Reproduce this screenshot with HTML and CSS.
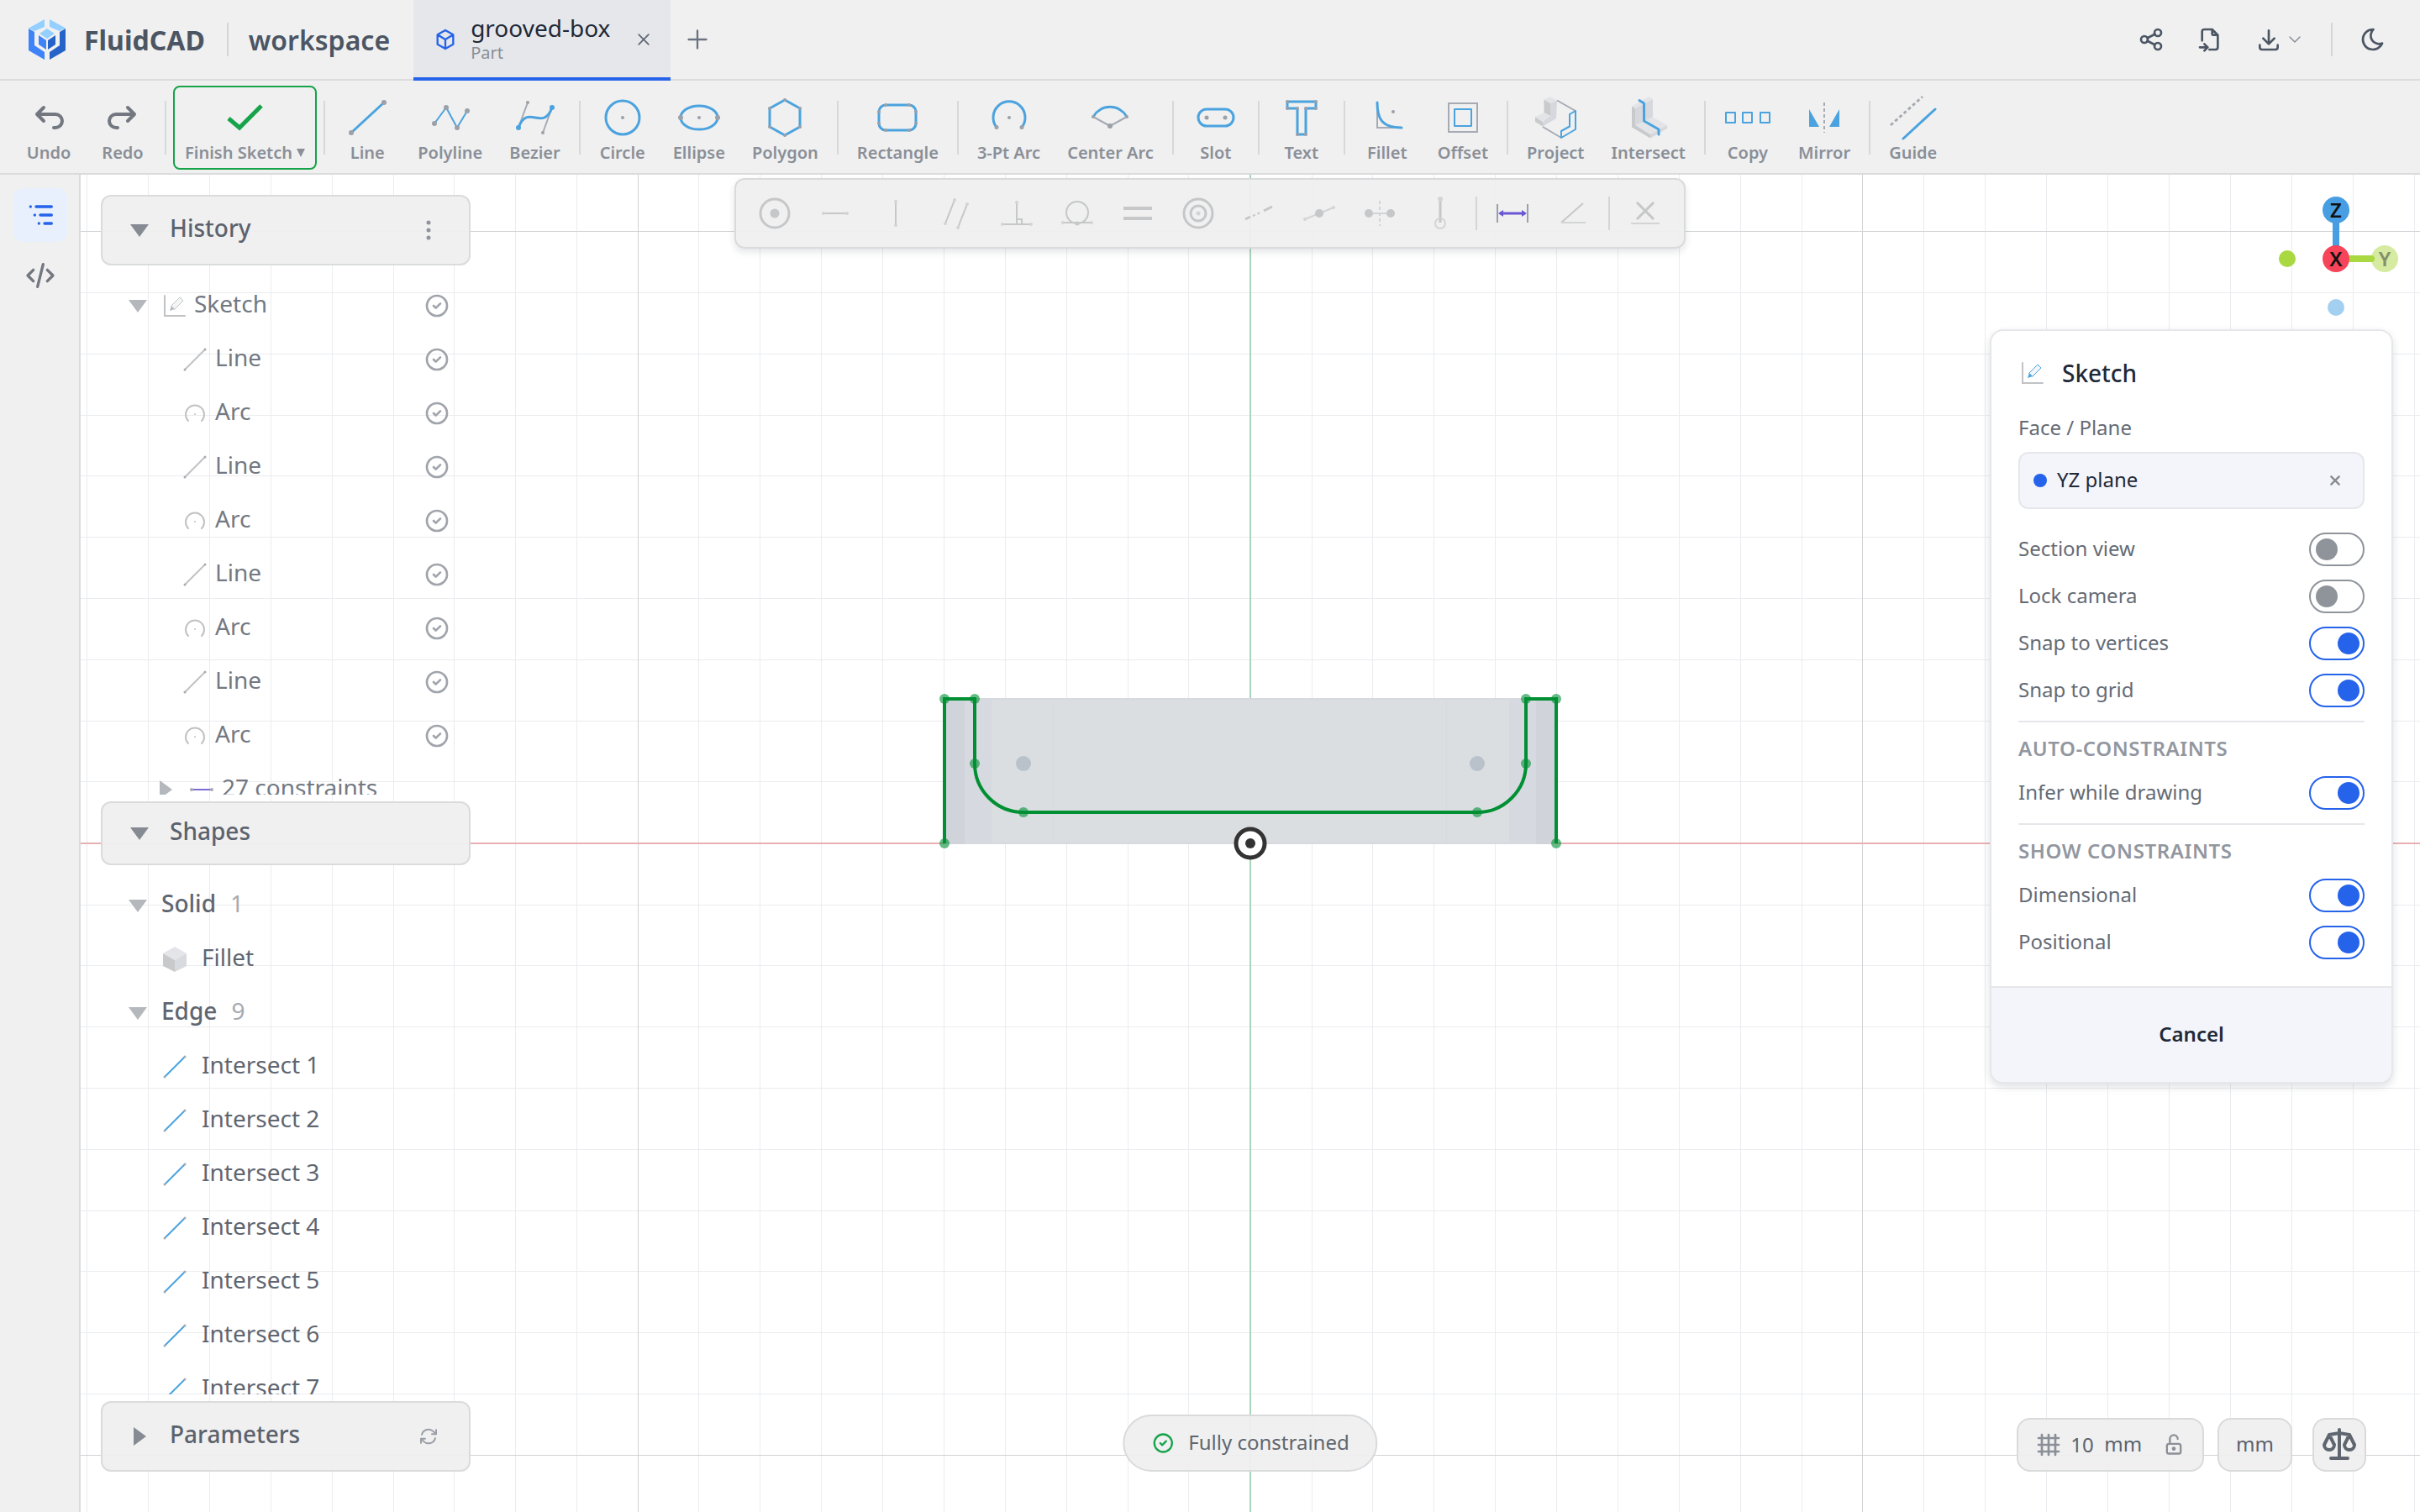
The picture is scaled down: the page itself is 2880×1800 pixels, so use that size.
FILE: index.html
```html
<!DOCTYPE html>
<html lang="en">
<head>
<meta charset="utf-8">
<title>FluidCAD – grooved-box</title>
<link rel="stylesheet" href="styles.css">
</head>
<body>
<svg class="defs" aria-hidden="true">
  <symbol id="i-line" viewBox="0 0 56 56"><path class="b" d="M9 46L48 10"/><circle class="g" cx="9" cy="46" r="3"/><circle class="g" cx="48" cy="10" r="3"/></symbol>
  <symbol id="i-check" viewBox="0 0 24 24"><circle cx="12" cy="12" r="9"/><path d="M9 12l2 2l4-4"/></symbol>
  <symbol id="i-edge" viewBox="0 0 32 32"><path d="M5 27L27 5"/><circle class="end" cx="4" cy="28" r="1.500"/><circle class="end" cx="28" cy="4" r="1.500"/></symbol>
  <symbol id="i-arc" viewBox="0 0 32 32"><path d="M8 25A11 11 0 1 1 24 25"/><path d="M16 17v.1"/></symbol>
  <symbol id="i-sketch" viewBox="0 0 32 32"><path class="ax" d="M5 4V28H29"/><path class="tip" d="M11 22l2-6 4 4z"/><path class="pen" d="M13 16L23 6l4 4-10 10z"/></symbol>
</svg>

<header class="topbar">
  <div class="brand">
    <svg class="logo" viewBox="0 0 44 48">
      <path fill="#93d0ff" d="M19 0V9L7 14L0 10.500zM25 0V9L37 14L44 10.500z"/>
      <path fill="#3f83f8" d="M0 11L7 15V31L19 39V48L0 37z"/>
      <path fill="#2563c9" d="M44 11L37 15V31L25 39V48L44 37z"/>
      <path fill="#93d0ff" d="M22 11L31 17L22 23L13 17z"/>
      <path fill="#3f83f8" d="M12 19L21 25V36L12 30z"/>
      <path fill="#2563c9" d="M32 19L23 25V36L32 30z"/>
    </svg>
    <span class="brand-name">FluidCAD</span>
    <span class="rule"></span>
    <span class="workspace-name">workspace</span>
  </div>
  <div class="tab">
    <svg class="ico tab-ico" viewBox="0 0 24 24"><path d="M12 2.500l8 4.500v10l-8 4.500l-8-4.500V7zM4 7l8 5l8-5M12 12v9.500"/></svg>
    <div class="tab-text"><span class="tab-title">grooved-box</span><span class="tab-kind">Part</span></div>
    <button class="plain" aria-label="Close tab"><svg class="ico close" viewBox="0 0 24 24"><path d="M5 5l14 14M19 5L5 19"/></svg></button>
  </div>
  <button class="plain add" aria-label="New tab"><svg class="ico i28" viewBox="0 0 24 24"><path d="M12 3v18M3 12h18"/></svg></button>
  <nav class="actions">
    <button class="plain" aria-label="Share"><svg class="ico i32" viewBox="0 0 24 24"><circle cx="6" cy="12" r="3"/><circle cx="18" cy="6" r="3"/><circle cx="18" cy="18" r="3"/><path d="M8.700 10.700l6.600-3.400M8.700 13.300l6.600 3.400"/></svg></button>
    <button class="plain" aria-label="Import"><svg class="ico i32" viewBox="0 0 24 24"><path d="M14 3v4a1 1 0 0 0 1 1h4M5 13V5a2 2 0 0 1 2-2h7l5 5v11a2 2 0 0 1-2 2h-5.500M3 19h7m-3-3l3 3l-3 3"/></svg></button>
    <button class="plain download" aria-label="Export"><svg class="ico i32" viewBox="0 0 24 24"><path d="M4 17v2a2 2 0 0 0 2 2h12a2 2 0 0 0 2-2v-2M7 11l5 5l5-5M12 4v12"/></svg><svg class="ico chev" viewBox="0 0 24 24"><path d="M4 8l8 8l8-8"/></svg></button>
    <span class="rule"></span>
    <button class="plain" aria-label="Dark mode"><svg class="ico i32" viewBox="0 0 24 24"><path d="M12 3c.132 0 .263 0 .393 0a7.500 7.500 0 0 0 7.920 12.446a9 9 0 1 1-8.313-12.454z"/></svg></button>
  </nav>
</header>

<div class="toolbar" role="toolbar" aria-label="Sketch tools">
  <button class="tool"><svg class="ico undo" viewBox="0 0 24 24"><path d="M9 14l-4-4l4-4M5 10h11a4 4 0 1 1 0 8h-1"/></svg><span>Undo</span></button>
  <button class="tool"><svg class="ico undo" viewBox="0 0 24 24"><path d="M15 14l4-4l-4-4M19 10H8a4 4 0 1 0 0 8h1"/></svg><span>Redo</span></button>
  <i class="sep"></i>
  <button class="tool finish"><svg class="glyph" viewBox="0 0 56 56"><path class="ok" d="M8 29L21 40L47 14"/></svg><span>Finish Sketch <svg class="drop" viewBox="0 0 10 10"><path d="M0 0H10L5 10z"/></svg></span></button>
  <i class="sep"></i>
  <button class="tool"><svg class="glyph"><use href="#i-line"/></svg><span>Line</span></button>
  <button class="tool"><svg class="glyph" viewBox="0 0 56 56"><path class="b thin" d="M9 35L23 16L36 40L48 20"/><circle class="g" cx="9" cy="35" r="3"/><circle class="g" cx="23" cy="16" r="3"/><circle class="g" cx="36" cy="40" r="3"/><circle class="g" cx="48" cy="20" r="3"/></svg><span>Polyline</span></button>
  <button class="tool"><svg class="glyph" viewBox="0 0 56 56"><path class="gl" d="M8 40L19 10M37 46L48 16"/><path class="b" d="M8 40C19 10 37 46 48 16"/><circle class="g" cx="19" cy="10" r="2"/><circle class="g" cx="37" cy="46" r="2"/><circle class="bf" cx="8" cy="40" r="3"/><circle class="bf" cx="48" cy="16" r="3"/></svg><span>Bezier</span></button>
  <i class="sep"></i>
  <button class="tool"><svg class="glyph" viewBox="0 0 56 56"><circle class="b" cx="28" cy="28" r="20"/><circle class="g" cx="28" cy="28" r="2"/></svg><span>Circle</span></button>
  <button class="tool"><svg class="glyph" viewBox="0 0 56 56"><ellipse class="b" cx="28" cy="28" rx="22" ry="14"/><circle class="g" cx="28" cy="28" r="2"/><circle class="g" cx="6" cy="28" r="3"/><circle class="g" cx="50" cy="28" r="3"/></svg><span>Ellipse</span></button>
  <button class="tool"><svg class="glyph" viewBox="0 0 56 56"><path class="b" d="M28 7L46 17V39L28 49L10 39V17z"/><g class="g"><circle cx="28" cy="7" r="2"/><circle cx="46" cy="17" r="2"/><circle cx="46" cy="39" r="2"/><circle cx="28" cy="49" r="2"/><circle cx="10" cy="39" r="2"/><circle cx="10" cy="17" r="2"/></g></svg><span>Polygon</span></button>
  <i class="sep"></i>
  <button class="tool"><svg class="glyph" viewBox="0 0 56 56"><rect class="b" x="6" y="13" width="44" height="30" rx="8"/><g class="g"><circle cx="14" cy="13" r="2"/><circle cx="42" cy="13" r="2"/><circle cx="14" cy="43" r="2"/><circle cx="42" cy="43" r="2"/><circle cx="6" cy="21" r="2"/><circle cx="6" cy="35" r="2"/><circle cx="50" cy="21" r="2"/><circle cx="50" cy="35" r="2"/></g></svg><span>Rectangle</span></button>
  <i class="sep"></i>
  <button class="tool"><svg class="glyph" viewBox="0 0 56 56"><path class="b" d="M13 39.500A19 19 0 1 1 43 39.500"/><circle class="g" cx="28" cy="28" r="2"/><circle class="g" cx="13" cy="39.500" r="2.500"/><circle class="g" cx="43" cy="39.500" r="2.500"/></svg><span>3-Pt Arc</span></button>
  <button class="tool"><svg class="glyph" viewBox="0 0 56 56"><path class="gl" d="M8 27L28 38L48 27"/><path class="b" d="M8 27A23 23 0 0 1 48 27"/><circle class="g" cx="8" cy="27" r="2"/><circle class="g" cx="48" cy="27" r="2"/><circle class="g" cx="28" cy="38" r="3"/></svg><span>Center Arc</span></button>
  <i class="sep"></i>
  <button class="tool"><svg class="glyph" viewBox="0 0 56 56"><rect class="b" x="7" y="18" width="42" height="20" rx="10"/><circle class="g" cx="17" cy="28" r="2.500"/><circle class="g" cx="39" cy="28" r="2.500"/></svg><span>Slot</span></button>
  <i class="sep"></i>
  <button class="tool"><svg class="glyph" viewBox="0 0 56 56"><path class="b" d="M11 9H45V17H33V48H23V17H11z"/><g class="g"><circle cx="11" cy="9" r="2"/><circle cx="45" cy="9" r="2"/><circle cx="45" cy="17" r="2"/><circle cx="33" cy="17" r="2"/><circle cx="33" cy="48" r="2"/><circle cx="23" cy="48" r="2"/><circle cx="23" cy="17" r="2"/><circle cx="11" cy="17" r="2"/></g></svg><span>Text</span></button>
  <i class="sep"></i>
  <button class="tool"><svg class="glyph" viewBox="0 0 56 56"><path class="gl" d="M16 20V40H36"/><path class="b" d="M16 10C16 30 22 40 45 40"/><circle class="g" cx="35" cy="21" r="2"/></svg><span>Fillet</span></button>
  <button class="tool"><svg class="glyph" viewBox="0 0 56 56"><rect class="gl" x="11" y="11" width="34" height="34"/><rect class="b thin" x="18" y="18" width="20" height="20"/></svg><span>Offset</span></button>
  <i class="sep"></i>
  <button class="tool"><svg class="glyph" viewBox="0 0 56 56"><path fill="#c9cacb" d="M14.500 6.500L22 11V26L14.500 22zM4 27L13 33V38.500L4 33z"/><path fill="#e3e4e7" d="M14.500 6.500L21.500 3L30 7.500L22 11zM4 27L14.500 22L22 26L13 33z"/><path fill="#d6d8dd" d="M22 11L30 7.500L29 29L13 38.500V33L22 26z"/><path class="gl" d="M30 7.500L52 20M13 39L35 52"/><path class="b thin" d="M52 20L45 24V38.500L35 44V52L52 42z"/></svg><span>Project</span></button>
  <button class="tool"><svg class="glyph" viewBox="0 0 56 56"><path fill="#c9cacb" d="M8 14.500L12.500 17V37L30 48V52.500L8 39.500z"/><path fill="#e3e4e7" d="M8 14.500L28.500 3L33 6L12.500 17zM12.500 37L32 27L50 37L30 48z"/><path fill="#d6d8dd" d="M12.500 17L33 6V27L12.500 37zM50 37V41L30 52.500V48z"/><path class="b" d="M17 7.500L22.500 11V32L40 42V48"/></svg><span>Intersect</span></button>
  <i class="sep"></i>
  <button class="tool"><svg class="glyph" viewBox="0 0 56 56"><path class="b thin" d="M2 22h11v12H2zM22 22h11v12H22zM43 22h11v12H43z"/></svg><span>Copy</span></button>
  <button class="tool"><svg class="glyph" viewBox="0 0 56 56"><path class="bf" d="M10 18V39H22zM46 18V39H34z"/><path class="gl" stroke-dasharray="4 3" d="M28 10V46"/></svg><span>Mirror</span></button>
  <i class="sep"></i>
  <button class="tool"><svg class="glyph" viewBox="0 0 56 56"><path class="gl heavy" stroke-dasharray="4 3" d="M1 37L39 3"/><path class="b" d="M16 53L54 18"/></svg><span>Guide</span></button>
</div>

<main class="work">
  <aside class="rail">
    <button class="rail-btn active" aria-label="Model tree"><svg class="ico i40" viewBox="0 0 24 24"><path d="M9 6h11M12 12h8M15 18h5M5 6v.010M8 12v.010M11 18v.010"/></svg></button>
    <button class="rail-btn" aria-label="Code"><svg class="ico i40" viewBox="0 0 24 24"><path d="M7 8l-4 4l4 4M17 8l4 4l-4 4M14 4l-4 16"/></svg></button>
  </aside>

  <section class="viewport">
    <svg class="scene">
      <svg x="50%" y="50%" overflow="visible">
        <path class="minor" d="M-1384.500-800v1600M-1311.500-800v1600M-1238.500-800v1600M-1165.500-800v1600M-1092.500-800v1600M-1019.500-800v1600M-947.500-800v1600M-874.500-800v1600M-801.500-800v1600M-656.500-800v1600M-583.500-800v1600M-510.500-800v1600M-437.500-800v1600M-364.500-800v1600M-291.500-800v1600M-218.500-800v1600M-145.500-800v1600M-73.500-800v1600M73.500-800v1600M145.500-800v1600M218.500-800v1600M291.500-800v1600M364.500-800v1600M437.500-800v1600M510.500-800v1600M583.500-800v1600M656.500-800v1600M801.500-800v1600M874.500-800v1600M947.500-800v1600M1020.500-800v1600M1093.500-800v1600M1166.500-800v1600M1239.500-800v1600M1312.500-800v1600M1385.500-800v1600
          M-1400-655.500h2800M-1400-582.500h2800M-1400-509.500h2800M-1400-437.500h2800M-1400-364.500h2800M-1400-291.500h2800M-1400-218.500h2800M-1400-145.500h2800M-1400-73.500h2800M-1400 73.500h2800M-1400 145.500h2800M-1400 218.500h2800M-1400 291.500h2800M-1400 364.500h2800M-1400 437.500h2800M-1400 509.500h2800M-1400 582.500h2800M-1400 655.500h2800"/>
        <path class="major" d="M-728.500-800v1600M728.500-800v1600M-1400-728.500h2800M-1400 728.500h2800"/>
        <path class="axis-x" d="M-1400 0H1400"/>
        <path class="axis-y" d="M0-800V800"/>
        <path fill="#d6d9df" d="M-364-173H364V1H-364z"/>
        <path fill="#d0d3d9" d="M-364-173h24V1h-24zM340-173h24V1h-24z"/>
        <path fill="#dadee1" d="M-308-171H308V-1H-308z"/>
        <path stroke="#d6dade" d="M-234.500-171V-1M233.500-171V-1"/>
        <circle fill="#b9c1cb" cx="-270" cy="-95" r="9"/><circle fill="#b9c1cb" cx="270" cy="-95" r="9"/>
        <path class="profile" d="M-364 0V-172H-328V-95A58 58 0 0 0-270-37H270A58 58 0 0 0 328-95V-172H364V0"/>
        <g class="vertex"><circle cx="-364" cy="0" r="6"/><circle cx="-364" cy="-172" r="6"/><circle cx="-328" cy="-172" r="6"/><circle cx="-328" cy="-95" r="6"/><circle cx="-270" cy="-37" r="6"/><circle cx="270" cy="-37" r="6"/><circle cx="328" cy="-95" r="6"/><circle cx="328" cy="-172" r="6"/><circle cx="364" cy="-172" r="6"/><circle cx="364" cy="0" r="6"/></g>
        <circle cx="0" cy="0" r="17" fill="#fff" stroke="#333" stroke-width="5"/><circle cx="0" cy="0" r="6" fill="#333"/>
      </svg>
    </svg>

    <div class="browser">
      <button class="head"><svg class="tri" viewBox="0 0 22 22"><path d="M0 4H22L11 19z"/></svg><span>History</span><svg class="dots" viewBox="0 0 32 32"><circle cx="16" cy="7" r="2.500"/><circle cx="16" cy="16" r="2.500"/><circle cx="16" cy="25" r="2.500"/></svg></button>
      <div class="tree history">
        <div class="row"><svg class="tri" viewBox="0 0 22 22"><path d="M0 4H22L11 19z"/></svg><svg class="ti" viewBox="0 0 32 32"><use href="#i-sketch"/></svg><span>Sketch</span><svg class="ico ck"><use href="#i-check"/></svg></div>
        <div class="row sub"><svg class="ti"><use href="#i-edge"/></svg><span>Line</span><svg class="ico ck"><use href="#i-check"/></svg></div>
        <div class="row sub"><svg class="ti"><use href="#i-arc"/></svg><span>Arc</span><svg class="ico ck"><use href="#i-check"/></svg></div>
        <div class="row sub"><svg class="ti"><use href="#i-edge"/></svg><span>Line</span><svg class="ico ck"><use href="#i-check"/></svg></div>
        <div class="row sub"><svg class="ti"><use href="#i-arc"/></svg><span>Arc</span><svg class="ico ck"><use href="#i-check"/></svg></div>
        <div class="row sub"><svg class="ti"><use href="#i-edge"/></svg><span>Line</span><svg class="ico ck"><use href="#i-check"/></svg></div>
        <div class="row sub"><svg class="ti"><use href="#i-arc"/></svg><span>Arc</span><svg class="ico ck"><use href="#i-check"/></svg></div>
        <div class="row sub"><svg class="ti"><use href="#i-edge"/></svg><span>Line</span><svg class="ico ck"><use href="#i-check"/></svg></div>
        <div class="row sub"><svg class="ti"><use href="#i-arc"/></svg><span>Arc</span><svg class="ico ck"><use href="#i-check"/></svg></div>
        <div class="row constraints"><svg class="tri" viewBox="0 0 22 22"><path d="M4 0V22L19 11z"/></svg><svg class="ti dash" viewBox="0 0 32 32"><path d="M5 16H27"/><circle cx="4" cy="16" r="2"/><circle cx="28" cy="16" r="2"/></svg><span>27 constraints</span></div>
      </div>
      <button class="head slim"><svg class="tri" viewBox="0 0 22 22"><path d="M0 4H22L11 19z"/></svg><span>Shapes</span></button>
      <div class="tree shapes">
        <div class="row group"><svg class="tri" viewBox="0 0 22 22"><path d="M0 4H22L11 19z"/></svg><span>Solid</span><span class="count">1</span></div>
        <div class="row leaf"><svg class="ti" viewBox="0 0 32 32"><path fill="#e4e5e8" d="M16 1L30 9L16 17L2 9z"/><path fill="#c8c9ca" d="M2 9L16 17V31L2 24z"/><path fill="#d7dade" d="M30 9L16 17V31L30 24z"/></svg><span>Fillet</span></div>
        <div class="row group"><svg class="tri" viewBox="0 0 22 22"><path d="M0 4H22L11 19z"/></svg><span>Edge</span><span class="count">9</span></div>
        <div class="row leaf edge"><svg class="ti"><use href="#i-edge"/></svg><span>Intersect 1</span></div>
        <div class="row leaf edge"><svg class="ti"><use href="#i-edge"/></svg><span>Intersect 2</span></div>
        <div class="row leaf edge"><svg class="ti"><use href="#i-edge"/></svg><span>Intersect 3</span></div>
        <div class="row leaf edge"><svg class="ti"><use href="#i-edge"/></svg><span>Intersect 4</span></div>
        <div class="row leaf edge"><svg class="ti"><use href="#i-edge"/></svg><span>Intersect 5</span></div>
        <div class="row leaf edge"><svg class="ti"><use href="#i-edge"/></svg><span>Intersect 6</span></div>
        <div class="row leaf edge"><svg class="ti"><use href="#i-edge"/></svg><span>Intersect 7</span></div>
      </div>
      <button class="head"><svg class="tri" viewBox="0 0 22 22"><path d="M4 0V22L19 11z"/></svg><span>Parameters</span><svg class="ico refresh" viewBox="0 0 24 24"><path d="M16.023 9.348h4.992M2.985 19.644v-4.992h4.992M2.984 14.652l3.181 3.183a8.250 8.250 0 0 0 13.803-3.700M4.031 9.865a8.250 8.250 0 0 1 13.803-3.700l3.181 3.182m0-4.991v4.990"/></svg></button>
    </div>

    <svg class="gizmo" viewBox="0 0 160 160">
      <path stroke="#479ee3" stroke-width="8" d="M80 80V22"/>
      <circle cx="80" cy="22" r="16" fill="#479ee3"/><circle cx="138" cy="80" r="16" fill="#d6eba1"/><path stroke="#aad841" stroke-width="8" stroke-linecap="round" d="M90 80H122"/><circle cx="80" cy="80" r="16" fill="#f8445a"/>
      <circle cx="22" cy="80" r="10" fill="#aad841"/><circle cx="80" cy="138" r="10" fill="#a3cff1"/>
      <text x="80" y="31">Z</text><text x="80" y="89">X</text><text class="dim" x="138" y="89">Y</text>
    </svg>

    <form class="panel">
      <div class="panel-body">
        <h2><svg class="ti tint" viewBox="0 0 32 32"><use href="#i-sketch"/></svg>Sketch</h2>
        <label class="field-label" for="plane-clear">Face / Plane</label>
        <div class="plane"><i class="dot"></i><span>YZ plane</span><button type="button" class="plain" id="plane-clear" aria-label="Clear plane"><svg class="ico" viewBox="0 0 12 12"><path d="M2 2l8 8M10 2l-8 8"/></svg></button></div>
        <label class="opt"><span>Section view</span><input type="checkbox"></label>
        <label class="opt"><span>Lock camera</span><input type="checkbox"></label>
        <label class="opt"><span>Snap to vertices</span><input type="checkbox" checked></label>
        <label class="opt"><span>Snap to grid</span><input type="checkbox" checked></label>
        <h3>AUTO-CONSTRAINTS</h3>
        <label class="opt"><span>Infer while drawing</span><input type="checkbox" checked></label>
        <h3>SHOW CONSTRAINTS</h3>
        <label class="opt"><span>Dimensional</span><input type="checkbox" checked></label>
        <label class="opt"><span>Positional</span><input type="checkbox" checked></label>
      </div>
      <button type="button" class="cancel">Cancel</button>
    </form>

    <div class="status"><svg class="ico" viewBox="0 0 24 24"><use href="#i-check"/></svg><span>Fully constrained</span></div>
    <div class="units">
      <div class="chip gridchip"><svg class="ico i32" viewBox="0 0 24 24"><path d="M3 6h18M3 12h18M3 18h18M6 3v18M12 3v18M18 3v18"/></svg><input aria-label="Grid size" value="10"><span>mm</span><svg class="ico lock" viewBox="0 0 24 24"><rect x="5" y="11" width="14" height="10" rx="2"/><circle cx="12" cy="16" r="1"/><path d="M8 11V6a4 4 0 0 1 8 0"/></svg></div>
      <button class="chip unit"><span>mm</span></button>
      <button class="chip scale" aria-label="Mass properties"><svg class="ico" viewBox="0 0 24 24"><path d="M7 20h10M6 6l6-1l6 1M12 3v17M9 12L6 6l-3 6a3 3 0 0 0 6 0M21 12l-3-6l-3 6a3 3 0 0 0 6 0"/></svg></button>
    </div>
  </section>

  <div class="constraintbar" role="toolbar" aria-label="Constraints">
    <button aria-label="Coincident"><svg viewBox="0 0 48 48"><circle class="c" cx="24" cy="24" r="17"/><circle class="f" cx="24" cy="24" r="5.500"/></svg></button>
    <button aria-label="Horizontal"><svg viewBox="0 0 48 48"><path class="c s" d="M10 24H38"/><circle class="l" cx="10" cy="24" r="2"/><circle class="l" cx="38" cy="24" r="2"/></svg></button>
    <button aria-label="Vertical"><svg viewBox="0 0 48 48"><path class="c s" d="M24 10V38"/><circle class="l" cx="24" cy="10" r="2"/><circle class="l" cx="24" cy="38" r="2"/></svg></button>
    <button aria-label="Parallel"><svg viewBox="0 0 48 48"><path class="c s" d="M22 8L11 36M37 13L26 41"/><g class="l"><circle cx="22" cy="8" r="2"/><circle cx="11" cy="36" r="2"/><circle cx="37" cy="13" r="2"/><circle cx="26" cy="41" r="2"/></g></svg></button>
    <button aria-label="Perpendicular"><svg viewBox="0 0 48 48"><path class="c s" d="M24 11V37M7 37H41M24 31H30V37"/><g class="l"><circle cx="24" cy="11" r="2"/><circle cx="7" cy="37" r="2"/><circle cx="41" cy="37" r="2"/></g></svg></button>
    <button aria-label="Tangent"><svg viewBox="0 0 48 48"><circle class="c s" cx="24" cy="23" r="13"/><path class="c s" d="M7 35H41"/><circle class="f" cx="24" cy="36" r="2.500"/><circle class="l" cx="7" cy="35" r="2"/><circle class="l" cx="41" cy="35" r="2"/></svg></button>
    <button aria-label="Equal"><svg viewBox="0 0 48 48"><path class="c t" d="M7 18H41M7 30H41"/></svg></button>
    <button aria-label="Concentric"><svg viewBox="0 0 48 48"><circle class="c" cx="24" cy="24" r="17"/><circle class="c" cx="24" cy="24" r="9"/><circle class="l" cx="24" cy="24" r="2.500"/></svg></button>
    <button aria-label="Collinear"><svg viewBox="0 0 48 48"><path class="c" d="M8 31L14 28M30 21L40 16"/><path class="c s" stroke-dasharray="3 3" d="M17 27L28 22"/></svg></button>
    <button aria-label="Midpoint"><svg viewBox="0 0 48 48"><path class="lc" d="M7 31L41 17"/><circle class="f" cx="24" cy="24" r="5"/><circle class="l" cx="7" cy="31" r="2"/><circle class="l" cx="41" cy="17" r="2"/></svg></button>
    <button aria-label="Symmetric"><svg viewBox="0 0 48 48"><path class="lc" d="M11 24H37"/><path class="lc" stroke-dasharray="4 3" d="M24 9V39"/><circle class="f" cx="11" cy="24" r="5"/><circle class="f" cx="37" cy="24" r="5"/></svg></button>
    <button aria-label="Fix"><svg viewBox="0 0 48 48"><path class="c" d="M24 8V35"/><circle class="lc" cx="24" cy="36" r="6"/><circle class="l" cx="24" cy="7" r="3"/></svg></button>
    <i class="vsep"></i>
    <button aria-label="Dimension"><svg viewBox="0 0 48 48"><path stroke="#9aa0ab" stroke-width="2" d="M6 13V35M42 13V35"/><path stroke="#6a57d5" stroke-width="3" d="M9 24H39"/><path fill="#6a57d5" d="M7 24l6-4v8zM41 24l-6-4v8z"/></svg></button>
    <button aria-label="Angle"><svg viewBox="0 0 48 48"><path class="c s" d="M36 12L10 35"/><path class="lc" d="M10 35H39"/></svg></button>
    <i class="vsep"></i>
    <button aria-label="Delete constraint"><svg viewBox="0 0 48 48"><path class="c" d="M14 11L34 31M34 11L14 31"/><path class="lc" d="M7 36H41"/></svg></button>
  </div>
</main>
</body>
</html>
```
FILE: styles.css
```css
* { box-sizing: border-box; }

body {
  margin: 0;
  min-height: 100vh;
  display: flex;
  flex-direction: column;
  font-family: "Noto Sans", sans-serif;
  font-size: 24px;
  color: #5f6670;
  background: #fff;
}

button, input {
  font: inherit;
  color: inherit;
}

button {
  margin: 0;
  padding: 0;
  border: 0;
  background: none;
}

svg { display: block; flex: none; }
.defs { position: absolute; width: 0; height: 0; }

.ico {
  fill: none;
  stroke: currentColor;
  stroke-width: 2;
  stroke-linecap: round;
  stroke-linejoin: round;
}
.i28 { width: 28px; height: 28px; }
.i32 { width: 32px; height: 32px; }
.i40 { width: 40px; height: 40px; }
.plain { display: flex; align-items: center; }

/* Top bar */
.topbar {
  display: flex;
  align-items: center;
  height: 96px;
  background: #f0f0f0;
  border-bottom: 2px solid #dadbdc;
}
.brand {
  display: flex;
  align-items: center;
  gap: 24px;
  padding: 0 28px 0 34px;
  color: #4b5563;
  font-size: 32px;
}
.logo { width: 44px; height: 48px; margin-right: -2px; }
.brand-name { font-weight: 700; margin-right: 2px; }
.workspace-name { font-weight: 600; }
.rule { width: 2px; height: 40px; background: #d4d5d7; }

.tab {
  display: flex;
  align-items: center;
  gap: 16px;
  align-self: stretch;
  height: 96px;
  padding: 2px 22px 0 24px;
  background: #e5e7eb;
  border-bottom: 4px solid #2563eb;
}
.tab-ico { width: 28px; height: 28px; color: #2563eb; }
.tab-text { display: flex; flex-direction: column; margin-right: 14px; }
.tab-title { font-size: 28px; line-height: 32px; color: #1f2937; }
.tab-kind { font-size: 20px; line-height: 28px; color: #8a8f98; }
.tab .plain { color: #5f6670; }
.close { width: 20px; height: 20px; }
.add { margin-left: 18px; color: #6b7280; }

.actions {
  display: flex;
  align-items: center;
  gap: 38px;
  margin-left: auto;
  padding-right: 40px;
  color: #4b5563;
}
.download { gap: 6px; }
.chev { width: 18px; height: 18px; color: #8a8f98; }
.actions .rule { margin: 0 -6px 0 -4px; }

/* Tool bar */
.toolbar {
  display: flex;
  align-items: center;
  gap: 4px;
  height: 112px;
  padding: 2px 16px 0;
  background: #f0f0f0;
  border-bottom: 2px solid #dadbdc;
}
.tool {
  display: flex;
  flex-direction: column;
  align-items: center;
  gap: 2px;
  min-width: 84px;
  height: 100px;
  padding: 8px 12px 6px;
  border: 2px solid transparent;
  border-radius: 8px;
  font-size: 20px;
  font-weight: 600;
  line-height: 24px;
  color: #8a8f98;
  white-space: nowrap;
}
.finish { border-color: #16a34a; }
.sep { width: 2px; height: 64px; margin: 0 4px; background: #d6d8da; }
.glyph { width: 56px; height: 56px; fill: none; }
.undo { width: 48px; height: 56px; color: #727780; }
.drop { display: inline-block; width: 10px; height: 10px; fill: currentColor; vertical-align: 2px; }
.b { fill: none; stroke: #4aa3df; stroke-width: 3; stroke-linejoin: round; stroke-linecap: round; }
.thin { stroke-width: 2; }
.bf { fill: #4aa3df; }
.g { fill: #9ba0a9; }
.gl { fill: none; stroke: #a6aab3; stroke-width: 2; }
.heavy { stroke-width: 3; }
.ok { stroke: #16a34a; stroke-width: 5; }

/* Work area */
.work { position: relative; display: flex; flex: 1; }
.rail {
  display: flex;
  flex-direction: column;
  align-items: center;
  gap: 8px;
  width: 96px;
  padding: 16px 0 0 2px;
  background: #f0f0f0;
  border-right: 2px solid #dadbdc;
}
.rail-btn {
  display: grid;
  place-items: center;
  width: 64px;
  height: 64px;
  border-radius: 12px;
  color: #727780;
}
.rail-btn.active { background: #e8f0fe; color: #2563eb; }

.viewport { position: relative; flex: 1; overflow: hidden; }
.scene { position: absolute; inset: 0; width: 100%; height: 100%; }
.minor { stroke: #ebecef; }
.major { stroke: #d2d3d5; }
.axis-x { stroke: #e8b0b4; stroke-width: 2; }
.axis-y { stroke: #a9d5bb; stroke-width: 2; }
.profile { fill: none; stroke: #009033; stroke-width: 4; }
.vertex { fill: #009033; fill-opacity: .6; }

/* Model browser */
.browser {
  position: absolute;
  top: 24px;
  bottom: 48px;
  left: 24px;
  width: 440px;
  display: flex;
  flex-direction: column;
  font-size: 28px;
}
.head {
  display: flex;
  align-items: center;
  gap: 25px;
  flex: none;
  height: 84px;
  padding: 0 32px 0 33px;
  border: 2px solid #dadbdc;
  border-radius: 12px;
  background: rgba(239, 239, 239, .94);
  font-weight: 500;
  color: #5b626d;
}
.head.slim { height: 76px; }
.head .tri { color: #868b93; }
.head span { flex: 1; text-align: left; line-height: 32px; padding-bottom: 6px; }
.tri { width: 22px; height: 22px; color: #b4b8bd; }
.tri path { fill: currentColor; }
.dots { width: 32px; height: 32px; fill: #8f949c; }
.refresh { width: 24px; height: 24px; margin: 0 4px; color: #9a9ea6; }

.tree {
  flex: 1 1 0;
  min-height: 0;
  margin-bottom: 8px;
  padding-top: 16px;
  overflow: hidden;
}
.row { display: flex; align-items: center; height: 64px; padding: 0 24px 0 33px; }
.row span { line-height: 32px; padding-bottom: 6px; }
.history { color: #737983; }
.history .row { gap: 8px; }
.history .row > .tri { margin-right: 8px; }
.history .sub { padding-left: 96px; }
.history .constraints { padding-left: 66px; }
.ti { width: 32px; height: 32px; fill: none; stroke: #c0c2c4; stroke-width: 2; stroke-linecap: round; }
.end { fill: #a6aab3; stroke: none; }
.leaf .ti path[fill] { stroke: none; }
.ck { width: 32px; height: 32px; margin-left: auto; color: #a0a4ab; }
.dash { stroke: #7c6bd6; }
.dash circle { fill: #a6aab3; stroke: none; }
.ax { stroke: #c0c2c4; }
.tip { fill: var(--pen, #b5b8bc); stroke: none; }
.pen { fill: #f4f5f6; stroke: var(--pen, #c0c2c4); stroke-width: 1; }
.group { gap: 17px; font-weight: 500; }
.count { font-weight: 400; color: #a5a9b0; }
.leaf { gap: 16px; padding-left: 72px; }
.edge .ti { stroke: #4aa3df; }

/* Orientation gizmo */
.gizmo { position: absolute; top: 20px; right: 20px; width: 160px; height: 160px; }
.gizmo text { font-size: 24px; font-weight: 600; text-anchor: middle; fill: #111; }
.gizmo .dim { fill: #84906a; }

/* Sketch panel */
.panel {
  position: absolute;
  top: 184px;
  right: 32px;
  width: 480px;
  overflow: hidden;
  border: 2px solid #e5e7eb;
  border-radius: 16px;
  background: #fff;
  box-shadow: 0 4px 10px rgba(30, 41, 59, .14);
}
.panel-body { display: flex; flex-direction: column; gap: 16px; padding: 32px; color: #646b75; }
h2 {
  display: flex;
  align-items: center;
  gap: 20px;
  margin: 0 0 15px;
  font-size: 28px;
  line-height: 36px;
  font-weight: 500;
  color: #1f2937;
}
.tint { --pen: #4aa3df; }
.field-label { margin-bottom: -3px; line-height: 32px; }
.plane {
  display: flex;
  align-items: center;
  gap: 12px;
  height: 68px;
  margin-bottom: 12px;
  padding: 0 26px 0 16px;
  border: 2px solid #e5e7eb;
  border-radius: 12px;
  background: #f3f5fa;
  color: #1f2937;
}
.plane span { flex: 1; }
.plane span, .opt span, .status span, .chip span { line-height: 32px; padding-bottom: 2px; }
.dot { width: 16px; height: 16px; border-radius: 50%; background: #2563eb; }
.plane svg { width: 14px; height: 14px; color: #868b93; }
.opt { display: flex; align-items: center; justify-content: space-between; height: 40px; }
.opt input {
  appearance: none;
  display: flex;
  width: 66px;
  height: 40px;
  margin: 0;
  padding: 5px 4px 5px 6px;
  border: 2px solid #8f949b;
  border-radius: 20px;
  background: #fff;
}
.opt input::before { content: ""; width: 26px; height: 26px; border-radius: 50%; background: #8f949b; }
.opt input:checked { justify-content: flex-end; border-color: #2563eb; }
.opt input:checked::before { background: #2563eb; }
h3 {
  margin: 0;
  padding: 15px 0 1px;
  border-top: 2px solid #e5e7eb;
  font-size: 24px;
  line-height: 32px;
  font-weight: 600;
  letter-spacing: .025em;
  color: #92979f;
}
.cancel {
  width: 100%;
  height: 114px;
  padding-bottom: 4px;
  border-top: 2px solid #e5e7eb;
  background: #f3f5fa;
  font-weight: 600;
  color: #1f2937;
}

/* Bottom chips */
.status, .chip {
  display: flex;
  align-items: center;
  border: 2px solid #d9dadb;
  background: rgba(239, 239, 239, .94);
}
.status {
  position: absolute;
  bottom: 48px;
  left: 50%;
  transform: translateX(-50%);
  gap: 16px;
  height: 68px;
  padding: 0 32px;
  border-radius: 34px;
  white-space: nowrap;
}
.status svg { width: 28px; height: 28px; color: #16a34a; }
.units { position: absolute; right: 64px; bottom: 48px; display: flex; gap: 16px; color: #5b626d; }
.chip { height: 64px; padding: 0 20px; border-radius: 16px; }
.gridchip .ico { color: #8a8f98; }
.gridchip input { width: 28px; margin: 0 12px 0 10px; padding: 0 0 2px; border: 0; background: none; }
.gridchip .lock { width: 28px; height: 28px; margin-left: 24px; }
.scale { margin-left: 8px; padding: 0 6px; color: #5f6670; }
.scale svg { width: 48px; height: 48px; }

/* Constraint bar */
.constraintbar {
  position: absolute;
  top: 4px;
  left: 50%;
  transform: translateX(-50%);
  display: flex;
  align-items: center;
  gap: 8px;
  height: 84px;
  padding: 0 14px;
  border: 2px solid #d9dadc;
  border-radius: 12px;
  background: rgba(239, 239, 239, .94);
  box-shadow: 0 4px 8px rgba(30, 41, 59, .12);
}
.constraintbar button { display: grid; place-items: center; width: 64px; height: 64px; }
.constraintbar svg { width: 48px; height: 48px; fill: none; }
.vsep { width: 2px; height: 40px; margin: 0 2px; background: #d4d5d7; }
.c { stroke: #c5c7c8; stroke-width: 3; }
.s { stroke-width: 2; }
.t { stroke-width: 4; }
.f { fill: #c5c7c8; }
.l { fill: #d2d4d6; }
.lc { stroke: #d2d4d6; stroke-width: 2; }
```
